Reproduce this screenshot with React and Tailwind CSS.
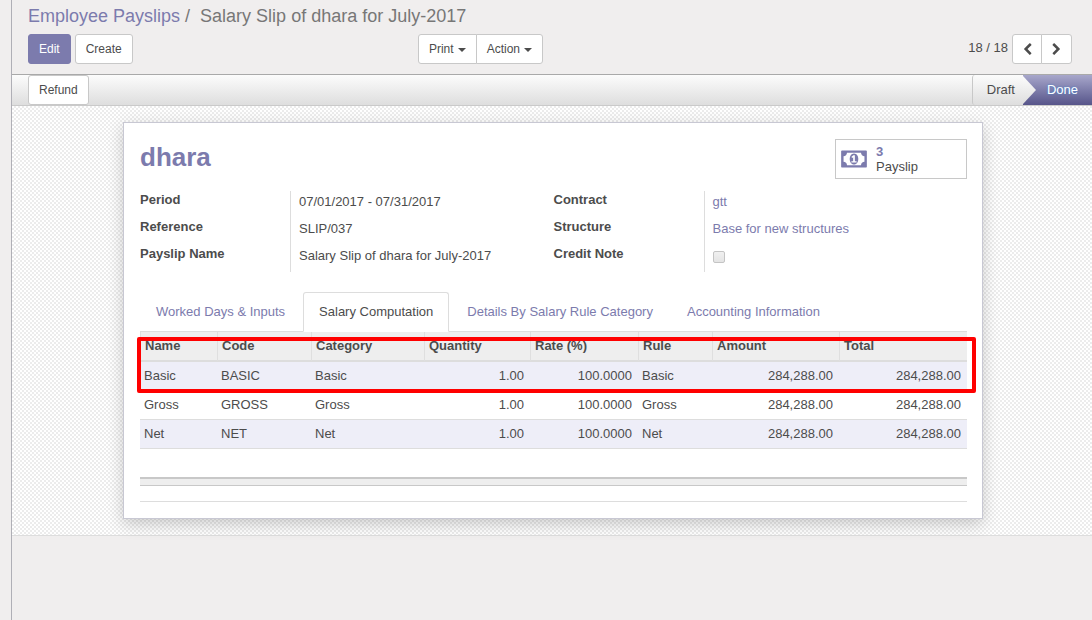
import React from "react";

const BUTTON =
  "h-[30px] rounded-[3px] border border-[#c8c8c8] bg-white px-[10px] text-[12px] leading-4 text-[#4c4c4c]";

function Caret() {
  return (
    <svg viewBox="0 0 8 4" className="mt-[2px] h-1 w-2 fill-current" aria-hidden="true">
      <path d="M0 0h8L4 4z" />
    </svg>
  );
}

function MoneyIcon() {
  return (
    <svg viewBox="0 0 1920 1792" className="h-6 w-[26px] shrink-0 fill-[#7c7bad]" aria-hidden="true">
      <path d="M768 1152h384v-96H1024V608H910L762 745l77 80q42-37 55-57h2v288H768v96zm512-256q0 70-21 142t-59.5 134-101.5 101-138 39-138-39-101.5-101-59.5-134-21-142 21-142 59.5-134 101.5-101 138-39 138 39 101.5 101 59.5 134 21 142z" />
      <path
        fillRule="evenodd"
        d="M64 256H1856q26 0 45 19t19 45V1472q0 26-19 45t-45 19H64q-26 0-45-19t-19-45V320q0-26 19-45t45-19zM1740 690q-106 0-181-75t-75-181H436q0 106-75 181t-181 75v412q106 0 181 75t75 181h1048q0-106 75-181t181-75z"
      />
    </svg>
  );
}

function Chevron({ d }) {
  return (
    <svg viewBox="0 0 1792 1792" className="h-[13px] w-[13px] fill-[#4c4c4c]" aria-hidden="true">
      <path d={d} />
    </svg>
  );
}

const CHEVRON_LEFT =
  "M1427 301l-531 531 531 531q19 19 19 45t-19 45l-166 166q-19 19-45 19t-45-19l-742-742q-19-19-19-45t19-45l742-742q19-19 45-19t45 19l166 166q19 19 19 45t-19 45z";
const CHEVRON_RIGHT =
  "M1363 877l-742 742q-19 19-45 19t-45-19l-166-166q-19-19-19-45t19-45l531-531-531-531q-19-19-19-45t19-45l166-166q19-19 45-19t45 19l742 742q19 19 19 45t-19 45z";

function ControlPanel() {
  return (
    <header className="border-b border-[#a9a9a9] pt-1 pr-5 pb-[10px] pl-4">
      <nav aria-label="Breadcrumb" className="flex text-[18px] leading-6 text-[#777777]">
        <a href="#payslips" className="text-[#7c7bad]">Employee Payslips</a>
        <span className="px-[5px]">/</span>
        <span className="pl-[5px]">Salary Slip of dhara for July-2017</span>
      </nav>
      <div className="mt-[6px] grid grid-cols-2 gap-[14px]">
        <div className="flex justify-between">
          <div className="flex gap-1">
            <button className="h-[30px] rounded-[3px] border border-[#7c7bad] bg-[#7c7bad] px-[10px] text-[12px] leading-4 text-white">
              Edit
            </button>
            <button className={BUTTON}>Create</button>
          </div>
          <div className="flex">
            <button className="flex h-[30px] items-center gap-1 rounded-l-[3px] border border-[#c8c8c8] bg-white px-[10px] text-[12px] leading-4">
              Print <Caret />
            </button>
            <button className="-ml-px flex h-[30px] items-center gap-1 rounded-r-[3px] border border-[#c8c8c8] bg-white px-[10px] text-[12px] leading-4">
              Action <Caret />
            </button>
          </div>
        </div>
        <div className="flex justify-end gap-1">
          <span className="leading-7">18 / 18</span>
          <div className="flex">
            <button aria-label="Previous" className="flex h-[30px] w-[30px] items-center justify-center rounded-l-[3px] border border-[#c8c8c8] bg-white">
              <Chevron d={CHEVRON_LEFT} />
            </button>
            <button aria-label="Next" className="-ml-px flex h-[30px] w-[31px] items-center justify-center rounded-r-[3px] border border-[#c8c8c8] bg-white">
              <Chevron d={CHEVRON_RIGHT} />
            </button>
          </div>
        </div>
      </div>
    </header>
  );
}

function StatusBar() {
  return (
    <div className="flex h-[31px] justify-between border-b border-[#cacaca] bg-linear-to-b from-[#fcfcfc] to-[#dedede] pl-4">
      <button className={BUTTON}>Refund</button>
      <ol className="flex leading-[30px]">
        <li className="rounded-l-[3px] border-l border-[#c8c8c8] pr-2 pl-[14px]">Draft</li>
        <li className="relative bg-linear-to-b from-[#a8a7cb] to-[#57558a] pr-[14px] pl-6 text-white [text-shadow:0_0_2px_#3b86d8]">
          <svg viewBox="0 0 13 30" className="absolute top-0 left-0 h-[30px] w-[13px]" aria-hidden="true">
            <defs>
              <linearGradient id="arrow" x1="0" y1="0" x2="0" y2="1">
                <stop offset="0" stopColor="#fcfcfc" />
                <stop offset="1" stopColor="#dedede" />
              </linearGradient>
            </defs>
            <path d="M0 1L13 15L0 29z" fill="url(#arrow)" />
          </svg>
          Done
        </li>
      </ol>
    </div>
  );
}

function FieldGroup({ fields }) {
  return (
    <dl className="grid grid-cols-[151px_1fr]">
      {fields.map(({ name, label, value }) => (
        <React.Fragment key={name}>
          <dt className="h-[27px] font-bold leading-[18px]">{label || name}</dt>
          <dd className="-ml-px h-[27px] border-l border-[#dddddd] pt-[2px] pl-2 leading-[18px]">{value}</dd>
        </React.Fragment>
      ))}
    </dl>
  );
}

const HEADINGS = [
  ["Name", "w-[77px]"],
  ["Code", "w-[94px]"],
  ["Category", "w-[113px]"],
  ["Quantity", "w-[106px]"],
  ["Rate (%)", "w-[108px]"],
  ["Rule", "w-[74px]"],
  ["Amount", "w-[127px]"],
  ["Total", ""],
];
const LINES = [
  ["Basic", "BASIC"],
  ["Gross", "GROSS"],
  ["Net", "NET"],
];

function SalaryTable() {
  return (
    <div className="relative">
      <table className="w-full table-fixed border-separate border-spacing-0 text-left leading-[18px]">
        <thead className="bg-[#eeeeee]">
          <tr>
            {HEADINGS.map(([text, width]) => (
              <th key={text} className={`h-[30px] border-b-2 border-l border-b-[#dddddd] border-l-[#dfdfdf] px-1 ${width}`}>
                {text}
              </th>
            ))}
          </tr>
        </thead>
        <tbody>
          {LINES.map(([name, code]) => (
            <tr key={code} className="odd:bg-[#eeeef8] [&>td]:h-[29px] [&>td]:border-b [&>td]:border-[#dddddd] [&>td]:pr-[6px] [&>td]:pl-1">
              <td>{name}</td>
              <td>{code}</td>
              <td>{name}</td>
              <td className="text-right">1.00</td>
              <td className="text-right">100.0000</td>
              <td>{name}</td>
              <td className="text-right">284,288.00</td>
              <td className="text-right">284,288.00</td>
            </tr>
          ))}
        </tbody>
      </table>
      <div className="absolute top-[5px] -right-[9px] -left-[3px] h-14 rounded-[2px] border-4 border-[#ff0000]" />
    </div>
  );
}

function Tabs() {
  const tab = "h-10 rounded-t-[3px] border px-[15px] leading-[18px]";
  return (
    <div role="tablist" className="mt-5 flex gap-[2px] border-b border-[#dddddd] [&>button]:-mb-px">
      <button role="tab" className={`${tab} border-transparent text-[#7c7bad]`}>Worked Days &amp; Inputs</button>
      <button role="tab" aria-selected="true" className={`${tab} border-[#dddddd] border-b-white bg-white`}>
        Salary Computation
      </button>
      <button role="tab" className={`${tab} border-transparent text-[#7c7bad]`}>Details By Salary Rule Category</button>
      <button role="tab" className={`${tab} border-transparent text-[#7c7bad]`}>Accounting Information</button>
    </div>
  );
}

const PERIOD_FIELDS = [
  { name: "Period", value: "07/01/2017 - 07/31/2017" },
  { name: "Reference", value: "SLIP/037" },
  { name: "Payslip Name", value: "Salary Slip of dhara for July-2017" },
];

const CONTRACT_FIELDS = [
  { name: "Contract", value: <a href="#contract" className="text-[#7c7bad]">gtt</a> },
  { name: "Structure", value: <a href="#structure" className="text-[#7c7bad]">Base for new structures</a> },
  {
    name: "Credit Note",
    label: <label htmlFor="credit-note">Credit Note</label>,
    value: (
      <input
        id="credit-note"
        type="checkbox"
        className="mt-1 block size-3 appearance-none rounded-[2px] border border-[#c4c4c4] bg-linear-to-b from-[#f0f0f0] to-[#e4e4e4]"
      />
    ),
  },
];

export default function App() {
  return (
    <div className="flex min-h-screen bg-[#f0eeee] font-['Liberation_Sans',Arial,sans-serif] text-[13px] text-[#4c4c4c]">
      <div className="w-3 shrink-0 border-r border-[#afafb6]" />
      <div className="min-w-0 flex-1">
        <ControlPanel />
        <StatusBar />
        <main className="border-b border-[#dddddd] bg-[repeating-conic-gradient(#ececec_0_25%,#ffffff_0_50%)] bg-size-[4px_4px] pt-4 pr-4 pb-4 pl-[18px]">
          <section className="mx-auto max-w-[860px] border border-[#c8c8d3] bg-white py-4 pr-[15px] pl-4 shadow-[0_5px_15px_rgba(0,0,0,0.2)]">
            <div className="flex items-start justify-between">
              <h1 className="text-[26px] leading-9 font-bold text-[#7c7bad]">dhara</h1>
              <button className="flex h-10 w-[132px] items-center gap-[9px] border border-[#c8c8c8] bg-white pl-[5px] text-left leading-[15px]">
                <MoneyIcon />
                <span>
                  <span className="block font-bold text-[#7c7bad]">3</span>
                  <span className="block">Payslip</span>
                </span>
              </button>
            </div>
            <div className="mt-3 grid grid-cols-2">
              <FieldGroup fields={PERIOD_FIELDS} />
              <FieldGroup fields={CONTRACT_FIELDS} />
            </div>
            <Tabs />
            <SalaryTable />
            <div className="mt-7 h-[9px] border-t-2 border-b border-[#c8c8c8] bg-[#eeeeee]" />
            <div className="mt-[15px] border-t border-[#dddddd]" />
          </section>
        </main>
      </div>
    </div>
  );
}
